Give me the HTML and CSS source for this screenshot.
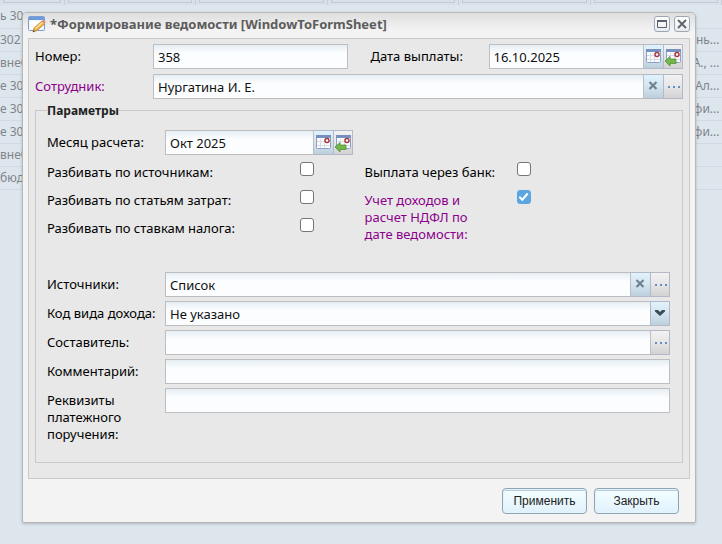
FILE: index.html
```html
<!DOCTYPE html>
<html lang="ru">

<head>
  <meta charset="utf-8">
  <title>Формирование ведомости</title>
  <link rel="stylesheet" href="styles.css">
</head>

<body>
  <svg class="sprite" aria-hidden="true">
    <symbol id="calendar" viewBox="0 0 18 18">
      <rect x="2.500" y="1.500" width="14" height="13" rx="1" fill="#fafbfd" stroke="#8d9fc6" />
      <path d="M2 1h15v3H2z" fill="#7790c2" />
      <path d="M3 7.500h13M3 11.500h13M6.500 5v9M10.500 5v9" stroke="#d9dbe2" />
      <circle cx="13" cy="6.500" r="2" fill="#fff" stroke="#a8323c" stroke-width="1.400" />
    </symbol>
    <symbol id="back" viewBox="0 0 18 18">
      <path d="M1 13l5-4.500v2.500h6v4.500H6V18z" fill="#74b54c" stroke="#4f9438" stroke-width=".8" />
    </symbol>
    <symbol id="cross" viewBox="0 0 18 18">
      <path d="M5.500 4l7 7M12.500 4l-7 7" stroke="#71828e" stroke-width="2.200" />
    </symbol>
    <symbol id="dots" viewBox="0 0 18 18">
      <path d="M4 8h2v2H4zM9 8h2v2H9zM14 8h2v2h-2z" fill="#5f90c8" />
    </symbol>
    <symbol id="arrow" viewBox="0 0 18 18">
      <path d="M4 6h3l2 2 2-2h3v1.500l-5 4.500-5-4.500z" fill="#3c4c5a" />
    </symbol>
  </svg>

  <div class="backdrop">
    <table class="list">
      <colgroup>
        <col class="first"><col><col><col><col><col>
      </colgroup>
      <thead>
        <tr><th></th><th></th><th></th><th></th><th></th><th></th></tr>
      </thead>
      <tbody>
        <tr><td>ь 30</td><td></td><td></td><td></td><td></td><td></td></tr>
        <tr><td>302</td><td></td><td></td><td></td><td></td><td>нь...</td></tr>
        <tr><td>внеб</td><td></td><td></td><td></td><td></td><td>А., ...</td></tr>
        <tr><td>е 30</td><td></td><td></td><td></td><td></td><td>Ал...</td></tr>
        <tr><td>е 30</td><td></td><td></td><td></td><td></td><td>фи...</td></tr>
        <tr><td>е 30</td><td></td><td></td><td></td><td></td><td>фи...</td></tr>
        <tr><td>внеб</td><td></td><td></td><td></td><td></td><td></td></tr>
        <tr><td>бюд</td><td></td><td></td><td></td><td></td><td></td></tr>
      </tbody>
    </table>
  </div>

  <form class="window" role="dialog" aria-labelledby="title">
    <header class="titlebar">
      <svg class="edit-icon" viewBox="0 0 18 18" aria-hidden="true">
        <rect x=".5" y="1.500" width="16" height="14" rx="1" fill="#eef4fb" stroke="#7d9fd0" />
        <path d="M1 2h15v3H1z" fill="#6f9adb" />
        <path d="M2 6h13v8H2z" fill="#fff" />
        <path d="M5 17l1-4 8-7 3 2.500-8 7z" fill="#f2b545" stroke="#b97a2a" stroke-width=".8" />
        <path d="M7 13l7-6 1 1-7 6z" fill="#fce09a" />
        <path d="M14 6l1.500-1.200 2.200 2.200L16.500 9z" fill="#e28a8a" />
        <path d="M5 17l.5-2 1.500 1.400z" fill="#444" />
      </svg>
      <h1 id="title">*Формирование ведомости [WindowToFormSheet]</h1>
      <button type="button" class="tool" aria-label="Развернуть">
        <svg viewBox="0 0 14 14"><path d="M2.500 3.500h9v7h-9z" fill="none" stroke="#5c636b" /><path d="M2 3h10v2H2z" fill="#5c636b" /></svg>
      </button>
      <button type="button" class="tool" aria-label="Закрыть окно">
        <svg viewBox="0 0 14 14"><path d="M3 3l8 8M11 3l-8 8" stroke="#5c636b" stroke-width="1.800" /></svg>
      </button>
    </header>

    <div class="panel">
      <div class="halves wide">
        <div class="row">
          <label for="number">Номер:</label>
          <div class="control"><input type="text" id="number" value="358"></div>
        </div>
        <div class="row">
          <label for="date">Дата выплаты:</label>
          <div class="control">
            <input type="text" id="date" value="16.10.2025">
            <button type="button" class="trigger blue" aria-label="Выбрать дату"><svg><use href="#calendar" /></svg></button>
            <button type="button" class="trigger" aria-label="Вернуть дату"><svg><use href="#calendar" /><use href="#back" /></svg></button>
          </div>
        </div>
      </div>
      <div class="row">
        <label for="employee" class="required">Сотрудник:</label>
        <div class="control">
          <input type="text" id="employee" value="Нургатина И. Е.">
          <button type="button" class="trigger blue" aria-label="Очистить"><svg><use href="#cross" /></svg></button>
          <button type="button" class="trigger" aria-label="Выбрать"><svg><use href="#dots" /></svg></button>
        </div>
      </div>

      <fieldset>
        <legend>Параметры</legend>
        <div class="halves">
          <div class="row">
            <label for="month">Месяц расчета:</label>
            <div class="control">
              <input type="text" id="month" value="Окт 2025">
              <button type="button" class="trigger blue" aria-label="Выбрать месяц"><svg><use href="#calendar" /></svg></button>
              <button type="button" class="trigger" aria-label="Вернуть месяц"><svg><use href="#calendar" /><use href="#back" /></svg></button>
            </div>
          </div>
        </div>
        <div class="halves checks">
          <div class="left">
            <div class="check"><label for="by-source">Разбивать по источникам:</label><input type="checkbox" id="by-source"></div>
            <div class="check"><label for="by-cost">Разбивать по статьям затрат:</label><input type="checkbox" id="by-cost"></div>
            <div class="check"><label for="by-tax">Разбивать по ставкам налога:</label><input type="checkbox" id="by-tax"></div>
          </div>
          <div class="right">
            <div class="check"><label for="bank">Выплата через банк:</label><input type="checkbox" id="bank"></div>
            <div class="check"><label for="by-date" class="required">Учет доходов и<br>расчет НДФЛ по<br>дате ведомости:</label><input type="checkbox" id="by-date" checked></div>
          </div>
        </div>

        <div class="rows">
          <div class="row">
            <label for="sources">Источники:</label>
            <div class="control">
              <input type="text" id="sources" value="Список">
              <button type="button" class="trigger blue" aria-label="Очистить"><svg><use href="#cross" /></svg></button>
              <button type="button" class="trigger" aria-label="Выбрать"><svg><use href="#dots" /></svg></button>
            </div>
          </div>
          <div class="row">
            <label for="code">Код вида дохода:</label>
            <div class="control combo">
              <select id="code"><option>Не указано</option></select>
              <span class="trigger blue"><svg><use href="#arrow" /></svg></span>
            </div>
          </div>
          <div class="row">
            <label for="author">Составитель:</label>
            <div class="control">
              <input type="text" id="author">
              <button type="button" class="trigger" aria-label="Выбрать"><svg><use href="#dots" /></svg></button>
            </div>
          </div>
          <div class="row">
            <label for="comment">Комментарий:</label>
            <div class="control"><input type="text" id="comment"></div>
          </div>
          <div class="row">
            <label for="details">Реквизиты<br>платежного<br>поручения:</label>
            <div class="control"><input type="text" id="details"></div>
          </div>
        </div>
      </fieldset>
    </div>

    <footer class="buttons">
      <button type="button" class="btn">Применить</button>
      <button type="button" class="btn">Закрыть</button>
    </footer>
  </form>
</body>

</html>
```
FILE: styles.css
```css
* {
  box-sizing: border-box;
}

body {
  margin: 0;
  padding: 12px 26px 20px 22px;
  background: #dde5ed;
  font-family: Tahoma, "Noto Sans", sans-serif;
  font-size: 13px;
  line-height: 17px;
  color: #000;
}

.sprite {
  display: none;
}

svg {
  display: block;
}

/* dimmed list behind the window */
.backdrop {
  position: absolute;
  inset: 0;
  overflow: hidden;
}

.list {
  width: 100%;
  table-layout: fixed;
  border-collapse: collapse;
  font-size: 12px;
  color: #7f858b;
}

.list .first {
  width: 64px;
}

.list th {
  height: 5px;
  padding: 0 3px 2px;
  border-right: 1px solid #c7d0d9;
  background: #d8e0e9;
}

.list th::after {
  content: "";
  display: block;
  height: 2px;
  border: 1px solid #c3cad3;
  border-top: none;
}

.list td {
  height: 23px;
  padding: 0 2px;
  line-height: 16px;
  white-space: nowrap;
  overflow: hidden;
  border-bottom: 1px solid #d1dae3;
}

.list td:first-child {
  padding: 0;
}

.list td:last-child {
  text-align: right;
}

/* window */
.window {
  position: relative;
  border: 1px solid #b5b8bb;
  border-radius: 5px 5px 2px 2px;
  background: #f3f3f3;
  box-shadow: 0 1px 3px rgba(0, 0, 0, 0.2);
}

.titlebar {
  display: flex;
  align-items: center;
  gap: 4px;
  height: 25px;
  padding: 0 5px 3px;
  border-radius: 4px 4px 0 0;
  background: linear-gradient(#dedede, #f3f3f3 70%);
}

.edit-icon {
  width: 18px;
  height: 18px;
}

h1 {
  flex: 1;
  margin: 0;
  font-size: 13px;
  color: #5c5c5c;
  white-space: nowrap;
}

.tool {
  width: 16px;
  height: 16px;
  padding: 0;
  border: 1px solid #9aa7b4;
  border-radius: 3px;
  background: linear-gradient(#fff, #e8ecef);
}

.tool svg {
  width: 14px;
  height: 14px;
}

.panel {
  margin: 0 5px;
  padding: 5px 6px 15px;
  border: 1px solid #cacaca;
  background: #e8e8e8;
}

.halves {
  display: grid;
  grid-template-columns: 1fr 1fr;
  gap: 12px;
}

.halves.wide {
  gap: 23px;
  margin-bottom: 5px;
}

.row {
  display: flex;
  align-items: flex-start;
}

.row label {
  flex: none;
  width: 118px;
  padding-top: 4px;
  white-space: nowrap;
}

label.required {
  color: #8b008b;
}

.control {
  display: flex;
  flex: 1;
  min-width: 0;
  height: 25px;
}

.control input,
.control select {
  flex: 1;
  min-width: 0;
  width: 100%;
  height: 25px;
  margin: 0;
  padding: 1px 4px 0;
  border: 1px solid #bcbec1;
  border-radius: 0;
  outline: none;
  appearance: none;
  background: linear-gradient(#e6eef3, #fbfdff 8px);
  font: inherit;
  color: #111;
}

.trigger {
  flex: none;
  width: 19px;
  height: 25px;
  padding: 0;
  border: 1px solid #b5b8c8;
  border-left: none;
  background: linear-gradient(#f2f2f2, #e6e6e6 50%, #d2d2d2);
}

.trigger.blue {
  width: 20px;
  background: linear-gradient(#e0f2fc, #d3e5ef 50%, #bcd0dc);
}

.trigger svg {
  width: 18px;
  height: 18px;
}

.combo {
  display: grid;
}

.combo select,
.combo .trigger {
  grid-area: 1 / 1;
}

.combo .trigger {
  justify-self: end;
  padding-top: 2px;
  border-left: 1px solid #b5b8c8;
  pointer-events: none;
}

fieldset {
  margin: 3px 0 0;
  padding: 11px 12px 19px 11px;
  border: 1px solid #c9c9c9;
}

legend {
  padding: 0;
  font-size: 12px;
  font-weight: bold;
  color: #222;
}

.checks {
  margin: 5px 0 28px;
}

.check {
  display: flex;
  align-items: flex-start;
  min-height: 28px;
}

.check label {
  padding-top: 4px;
  white-space: nowrap;
}

.left label {
  width: 253px;
}

.right label {
  width: 152px;
}

.check input {
  display: grid;
  place-items: center;
  flex: none;
  width: 14px;
  height: 14px;
  margin: 2px 0 0;
  border: 1px solid #767676;
  border-radius: 3px;
  appearance: none;
  background: #fff;
}

.check input:checked {
  border-color: #5ba5e1;
  background: #5ba5e1;
}

.check input:checked::after {
  content: "";
  width: 10px;
  height: 10px;
  background: #fff;
  clip-path: polygon(0 55%, 15% 40%, 37% 62%, 84% 8%, 100% 22%, 38% 92%);
}

.rows {
  display: grid;
  gap: 4px;
}

.buttons {
  display: flex;
  justify-content: flex-end;
  gap: 7px;
  padding: 9px 16px 8px;
}

.btn {
  width: 85px;
  height: 26px;
  padding: 0;
  border: 1px solid #8ea4b4;
  border-radius: 4px;
  background: linear-gradient(#f4ffff, #e0f1fd);
  box-shadow: inset 0 0 0 1px #e3f5fb, inset 0 3px 0 -1px #b5cad6;
  font-family: "Liberation Sans", Arial, sans-serif;
  font-size: 12px;
  color: #222;
}
```
